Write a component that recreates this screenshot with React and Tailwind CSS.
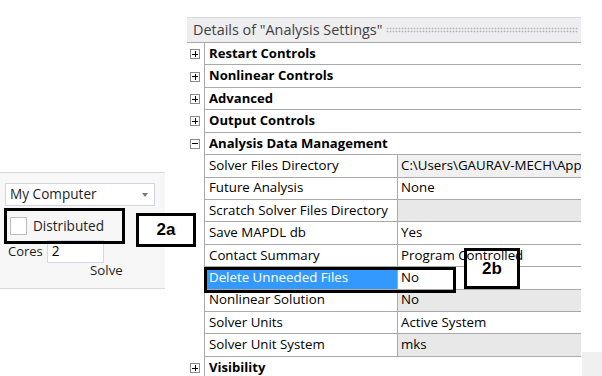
import React from "react";

const rows = [
  { kind: "group", label: "Restart Controls", sign: "+" },
  { kind: "group", label: "Nonlinear Controls", sign: "+" },
  { kind: "group", label: "Advanced", sign: "+" },
  { kind: "group", label: "Output Controls", sign: "+" },
  { kind: "group", label: "Analysis Data Management", sign: "-" },
  { kind: "prop", name: "Solver Files Directory", value: "C:\\Users\\GAURAV-MECH\\AppData\\Local", bg: "light" },
  { kind: "prop", name: "Future Analysis", value: "None", bg: "white" },
  { kind: "prop", name: "Scratch Solver Files Directory", value: "", bg: "gray" },
  { kind: "prop", name: "Save MAPDL db", value: "Yes", bg: "white" },
  { kind: "prop", name: "Contact Summary", value: "Program Controlled", bg: "white", top: true },
  { kind: "prop", name: "Delete Unneeded Files", value: "No", bg: "white", selected: true },
  { kind: "prop", name: "Nonlinear Solution", value: "No", bg: "gray" },
  { kind: "prop", name: "Solver Units", value: "Active System", bg: "white" },
  { kind: "prop", name: "Solver Unit System", value: "mks", bg: "gray" },
  { kind: "group", label: "Visibility", sign: "+" },
];

function Toggle({ sign }) {
  return (
    <div className="w-[10px] h-[10px] border border-[#8c8c8c] bg-white flex items-center justify-center relative">
      <div className="w-[6px] h-[1px] bg-black" />
      {sign === "+" ? <div className="absolute w-[1px] h-[6px] bg-black" /> : null}
    </div>
  );
}

function Row({ r }) {
  return (
    <div className="flex h-[22.43px]">
      <div className="w-[17px] shrink-0 flex items-center pl-[3px] bg-white">
        {r.kind === "group" ? <Toggle sign={r.sign} /> : null}
      </div>
      <div className="flex-1 flex border-l border-b border-[#a9a9a9] min-w-0">
        {r.kind === "group" ? (
          <div className="flex-1 flex items-center pl-[4px] font-bold text-[13.1px] text-black bg-white">
            {r.label}
          </div>
        ) : (
          <>
            <div
              className={
                r.selected
                  ? "w-[193px] shrink-0 flex items-center pl-[4px] bg-[#3399ff] text-white border-r border-[#a9a9a9] whitespace-nowrap overflow-hidden"
                  : "w-[193px] shrink-0 flex items-center pl-[4px] bg-white text-black border-r border-[#a9a9a9] whitespace-nowrap overflow-hidden"
              }
            >
              {r.name}
            </div>
            <div
              className={
                r.bg === "gray"
                  ? "flex-1 flex items-center pl-[3px] bg-[#e8e8e8] text-black whitespace-nowrap overflow-hidden"
                  : r.bg === "light"
                  ? "flex-1 flex items-center pl-[3px] bg-[#f0f0f0] text-black whitespace-nowrap overflow-hidden"
                  : r.top
                  ? "flex-1 flex items-center pl-[3px] text-black whitespace-nowrap overflow-hidden relative z-20"
                  : "flex-1 flex items-center pl-[3px] bg-white text-black whitespace-nowrap overflow-hidden"
              }
            >
              {r.value}
            </div>
          </>
        )}
      </div>
    </div>
  );
}

export default function App() {
  return (
    <div
      className="relative w-[602px] h-[376px] bg-white overflow-hidden flex items-start text-[13.3px] text-black"
      style={{ fontFamily: '"Open Sans", "Noto Sans", sans-serif' }}
    >
      {/* Left solve panel */}
      <div className="w-[187px] shrink-0">
        <div className="mt-[172px] w-[165px] h-[117px] bg-[#f7f7f8] border-y border-[#d8d8d8]">
          <div className="mt-[10px] ml-[5px] w-[150px] h-[23px] bg-white border border-[#d2d6dc] flex items-center justify-between pl-[4px] pr-[6px] text-[#1e1e1e] text-[13.6px]">
            <span>My Computer</span>
            <span className="w-0 h-0 border-l-[3px] border-r-[3px] border-t-[4px] border-l-transparent border-r-transparent border-t-[#7a7a7a]" />
          </div>
          <div className="mt-[11px] ml-[10px] flex items-center h-[18px]">
            <div className="w-[17px] h-[18px] bg-white border border-[#bcbcbc]" />
            <span className="ml-[6px] text-[13.6px] text-[#1e1e1e]">Distributed</span>
          </div>
          <div className="mt-[5px] flex items-center h-[23px]">
            <span className="ml-[8px] text-[13px] text-[#1e1e1e]">Cores</span>
            <div className="ml-[4px] w-[57px] h-[23px] bg-white border border-[#d3d9e6] flex items-center pl-[4px] text-[13.6px]">
              2
            </div>
          </div>
          <div className="ml-[90px] leading-[14px] text-[13.3px] text-[#1e1e1e]">Solve</div>
        </div>
      </div>

      {/* Details panel */}
      <div className="w-[394px] shrink-0 mt-[17px]">
        <div className="h-[26px] bg-[#eeeef1] border-t border-[#d8d8dc] border-b border-b-[#a8a8a8] flex items-center pl-[6px] pr-[3px]">
          <span className="text-[14.4px] text-[#404040] whitespace-nowrap">Details of "Analysis Settings"</span>
          <div className="flex-1 ml-[4px] h-[6px] bg-[radial-gradient(circle,#b2b2b2_0.8px,transparent_1.1px)] bg-[length:3px_3px]" />
        </div>
        {rows.map((r, i) => (
          <Row key={i} r={r} />
        ))}
      </div>

      {/* bottom-right faint block */}
      <div className="absolute left-[582px] top-[352px] w-[20px] h-[24px] bg-[#f0f0f0]" />

      {/* Annotations */}
      <div className="absolute left-[4px] top-[208px] w-[121px] h-[36px] border-[3px] border-black" />
      <div className="absolute left-[136px] top-[213px] w-[60px] h-[34px] border-[3px] border-black bg-white flex items-center justify-center">
        <span className="font-bold text-[17px] text-black" style={{ fontFamily: '"Liberation Sans", Arial, sans-serif' }}>2a</span>
      </div>
      <div className="absolute left-[204px] top-[267px] w-[252px] h-[26px] border-[3px] border-black" />
      <div className="absolute z-10 left-[464px] top-[248px] w-[56px] h-[41px] border-[3px] border-black bg-white flex items-start justify-center pt-[8px]">
        <span className="font-bold text-[17px] leading-[20px] text-black" style={{ fontFamily: '"Liberation Sans", Arial, sans-serif' }}>2b</span>
      </div>
    </div>
  );
}
